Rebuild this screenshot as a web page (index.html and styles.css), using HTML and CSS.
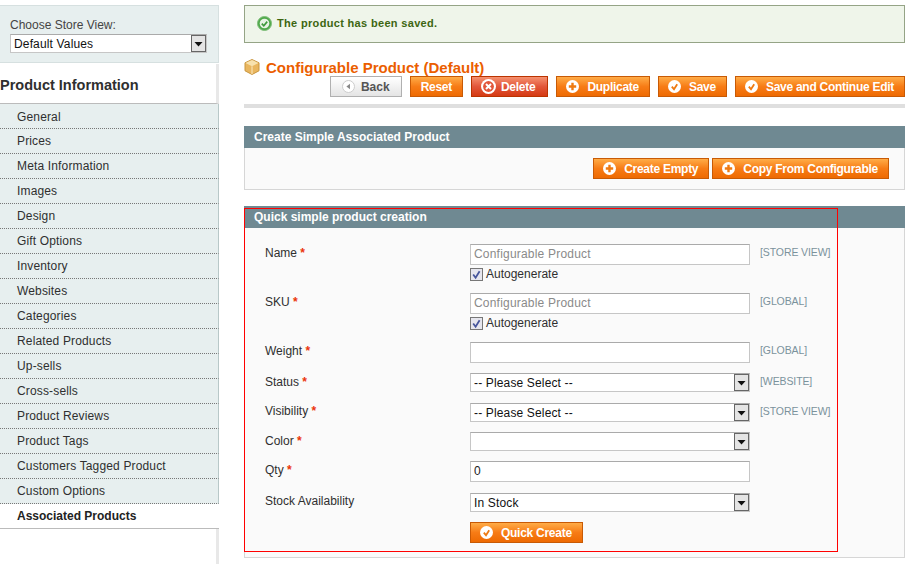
FILE: index.html
```html
<!DOCTYPE html>
<html lang="en">
<head>
    <meta charset="UTF-8">
    <meta name="viewport" content="width=device-width, initial-scale=1.0">
    <title>Configurable Product (Default)</title>
    <link rel="stylesheet" href="styles.css">
</head>
<body>
    <svg class="defs" width="0" height="0">
        <symbol id="i-plus" viewBox="0 0 13 13">
            <circle cx="6.5" cy="6.5" r="6.5" fill="#fff"/>
            <path d="M6.5 2.8v7.4M2.8 6.5h7.4" stroke="#ee7a12" stroke-width="2.4"/>
        </symbol>
        <symbol id="i-check" viewBox="0 0 13 13">
            <circle cx="6.5" cy="6.5" r="6.5" fill="#fff"/>
            <path d="M3.8 6.6l2.2 2.6 3.2-5" fill="none" stroke="#ee7a12" stroke-width="1.8"/>
        </symbol>
        <symbol id="i-arrow" viewBox="0 0 15 17">
            <rect x=".5" y=".5" width="14" height="16" fill="#e4e4e4" stroke="#666"/>
            <path d="M3.5 7h8l-4 4.5z" fill="#111"/>
        </symbol>
    </svg>

    <div class="page">
        <aside class="side">
            <div class="store">
                <label class="store-label">Choose Store View:</label>
                <div class="sel-wrap">
                    <select class="sel"><option>Default Values</option></select>
                    <svg class="sel-arrow"><use href="#i-arrow"/></svg>
                </div>
            </div>
            <h3 class="side-title">Product Information</h3>
            <ul class="tabs">
                <li>General</li>
                <li>Prices</li>
                <li>Meta Information</li>
                <li>Images</li>
                <li>Design</li>
                <li>Gift Options</li>
                <li>Inventory</li>
                <li>Websites</li>
                <li>Categories</li>
                <li>Related Products</li>
                <li>Up-sells</li>
                <li>Cross-sells</li>
                <li>Product Reviews</li>
                <li>Product Tags</li>
                <li>Customers Tagged Product</li>
                <li>Custom Options</li>
                <li class="active">Associated Products</li>
            </ul>
            <div class="side-rest"></div>
        </aside>

        <main class="main">
            <div class="msg">
                <svg class="msg-icon" viewBox="0 0 15 15" width="15" height="15">
                    <circle cx="7.5" cy="7.5" r="7" fill="#4fa84a" stroke="#7fbf7a"/>
                    <circle cx="7.5" cy="7.5" r="4.8" fill="#e8f3e4"/>
                    <path d="M4.8 7.6l2 2.2 3.4-4.2" fill="none" stroke="#3f9a3c" stroke-width="1.7"/>
                </svg>
                The product has been saved.
            </div>

            <div class="head">
                <h2 class="title">
                    <svg class="title-icon" viewBox="0 0 16 16" width="16" height="16">
                        <path d="M8 .5l7 3.3v8L8 15.5 1 11.8v-8z" fill="#e9b65f" stroke="#c9963f"/>
                        <path d="M1.5 4L8 7.3 14.5 4 8 1z" fill="#f8e2ae"/>
                        <path d="M8 7.3v7.8" stroke="#fbe9c2"/>
                    </svg>
                    Configurable Product (Default)
                </h2>
                <div class="actions">
                    <button class="btn btn-back">
                        <svg class="ico" viewBox="0 0 13 13">
                            <circle cx="6.5" cy="6.5" r="6" fill="#fff" stroke="#ccc"/>
                            <path d="M8 3.8v5.4L4.4 6.5z" fill="#888"/>
                        </svg>
                        Back
                    </button>
                    <button class="btn btn-plain">Reset</button>
                    <button class="btn btn-del">
                        <svg class="ico" viewBox="0 0 15 15">
                            <circle cx="7.5" cy="7.5" r="7.5" fill="#fff"/>
                            <circle cx="7.5" cy="7.5" r="5.4" fill="#e2563a"/>
                            <path d="M5 5l5 5M10 5l-5 5" stroke="#fff" stroke-width="2"/>
                        </svg>
                        Delete
                    </button>
                    <button class="btn"><svg class="ico"><use href="#i-plus"/></svg>Duplicate</button>
                    <button class="btn"><svg class="ico"><use href="#i-check"/></svg>Save</button>
                    <button class="btn"><svg class="ico"><use href="#i-check"/></svg>Save and Continue Edit</button>
                </div>
            </div>

            <section class="sect sect-first">
                <h4 class="sect-head">Create Simple Associated Product</h4>
                <div class="sect-body sect-btns">
                    <button class="btn"><svg class="ico"><use href="#i-plus"/></svg>Create Empty</button>
                    <button class="btn"><svg class="ico"><use href="#i-plus"/></svg>Copy From Configurable</button>
                </div>
            </section>

            <section class="sect sect-quick">
                <h4 class="sect-head">Quick simple product creation</h4>
                <div class="sect-body form">
                    <div class="row row-auto">
                        <label class="lbl">Name <em>*</em></label>
                        <div class="field">
                            <input class="txt txt-off" value="Configurable Product">
                            <div class="auto">
                                <svg class="check" viewBox="0 0 13 13" width="13" height="13">
                                    <rect x=".5" y=".5" width="12" height="12" fill="#e6e6ee" stroke="#777"/>
                                    <path d="M3.2 6.5l2.4 3.2 4-6.4" fill="none" stroke="#46559c" stroke-width="1.8"/>
                                </svg>
                                Autogenerate
                            </div>
                        </div>
                        <span class="scope">[STORE VIEW]</span>
                    </div>
                    <div class="row row-auto">
                        <label class="lbl">SKU <em>*</em></label>
                        <div class="field">
                            <input class="txt txt-off" value="Configurable Product">
                            <div class="auto">
                                <svg class="check" viewBox="0 0 13 13" width="13" height="13">
                                    <rect x=".5" y=".5" width="12" height="12" fill="#e6e6ee" stroke="#777"/>
                                    <path d="M3.2 6.5l2.4 3.2 4-6.4" fill="none" stroke="#46559c" stroke-width="1.8"/>
                                </svg>
                                Autogenerate
                            </div>
                        </div>
                        <span class="scope">[GLOBAL]</span>
                    </div>
                    <div class="row">
                        <label class="lbl">Weight <em>*</em></label>
                        <div class="field"><input class="txt"></div>
                        <span class="scope">[GLOBAL]</span>
                    </div>
                    <div class="row row-wide">
                        <label class="lbl">Status <em>*</em></label>
                        <div class="field sel-wrap">
                            <select class="sel"><option>-- Please Select --</option></select>
                            <svg class="sel-arrow"><use href="#i-arrow"/></svg>
                        </div>
                        <span class="scope">[WEBSITE]</span>
                    </div>
                    <div class="row">
                        <label class="lbl lbl-up">Visibility <em>*</em></label>
                        <div class="field sel-wrap">
                            <select class="sel"><option>-- Please Select --</option></select>
                            <svg class="sel-arrow"><use href="#i-arrow"/></svg>
                        </div>
                        <span class="scope">[STORE VIEW]</span>
                    </div>
                    <div class="row">
                        <label class="lbl">Color <em>*</em></label>
                        <div class="field sel-wrap">
                            <select class="sel"><option></option></select>
                            <svg class="sel-arrow"><use href="#i-arrow"/></svg>
                        </div>
                    </div>
                    <div class="row row-wide">
                        <label class="lbl">Qty <em>*</em></label>
                        <div class="field"><input class="txt" value="0"></div>
                    </div>
                    <div class="row">
                        <label class="lbl lbl-up">Stock Availability</label>
                        <div class="field sel-wrap">
                            <select class="sel"><option>In Stock</option></select>
                            <svg class="sel-arrow"><use href="#i-arrow"/></svg>
                        </div>
                    </div>
                    <div class="row">
                        <span class="lbl"></span>
                        <div class="field">
                            <button class="btn"><svg class="ico"><use href="#i-check"/></svg>Quick Create</button>
                        </div>
                    </div>
                </div>
                <div class="red-frame"></div>
            </section>
        </main>
    </div>
</body>
</html>
```

FILE: styles.css
```css
html, body {
    margin: 0;
    height: 100%;
    overflow: hidden;
    background-color: #fff;
    font-family: "Liberation Sans", Arial, sans-serif;
    font-size: 12px;
    color: #2f2f2f;
}

.defs {
    position: absolute;
}

.page {
    display: flex;
    align-items: flex-start;
    padding-top: 5px;
}

/* left column */
.side {
    width: 219px;
    flex: none;
}

.store {
    height: 58px;
    box-sizing: border-box;
    padding: 12px 11px 0 10px;
    background-color: #e7efef;
    border-top: 1px solid #d6e0e0;
    border-right: 1px solid #d6e0e0;
    border-bottom: 1px solid #d6e0e0;
}

.store-label {
    display: block;
    height: 16px;
    line-height: 15px;
    color: #444;
}

.side-title {
    margin: 1px 0 0;
    height: 40px;
    line-height: 42px;
    box-sizing: border-box;
    font-size: 14.5px;
    font-weight: bold;
    color: #2f2f2f;
    background-color: #fff;
    border-right: 3px solid #e8e8e8;
    border-bottom: 1px solid #bbb;
}

.tabs {
    list-style: none;
    margin: 0;
    padding: 0;
}

.tabs li {
    height: 25px;
    box-sizing: border-box;
    padding: 5px 0 0 17px;
    line-height: 15px;
    letter-spacing: .15px;
    background-color: #e7efef;
    border-right: 1px solid #b8c8c8;
    border-bottom: 1px dotted #777;
}

.tabs li:first-child {
    padding-top: 6px;
}

.tabs li.active {
    font-weight: bold;
    letter-spacing: 0;
    color: #222;
    background-color: #fff;
    border-right: none;
    border-bottom: 1px solid #bbb;
}

.side-rest {
    height: 40px;
    border-right: 3px solid #e8e8e8;
}

/* right column */
.main {
    width: 661px;
    margin-left: 25px;
    flex: none;
}

.msg {
    display: flex;
    align-items: center;
    gap: 5px;
    height: 38px;
    box-sizing: border-box;
    padding: 0 0 2px 12px;
    font-size: 11px;
    letter-spacing: .33px;
    font-weight: bold;
    color: #3d6611;
    background-color: #eff5ea;
    border: 1px solid #95a486;
}

.head {
    margin-top: 16px;
    padding-bottom: 6px;
    border-bottom: 4px solid #dfdfdf;
}

.title {
    display: flex;
    align-items: center;
    gap: 6px;
    margin: 0;
    height: 18px;
    font-size: 15px;
    line-height: 18px;
    font-weight: bold;
    color: #eb5e00;
}

.title-icon {
    flex: none;
    margin-top: -2px;
}

.actions {
    display: flex;
    justify-content: flex-end;
    gap: 8px;
    margin-top: -1px;
    padding-bottom: 1px;
}

.btn {
    display: inline-flex;
    align-items: center;
    height: 21px;
    box-sizing: border-box;
    padding: 0 10px 0 9px;
    font-family: inherit;
    font-size: 12px;
    letter-spacing: -.27px;
    font-weight: bold;
    color: #fff;
    white-space: nowrap;
    background: linear-gradient(#ffac47, #f77c16 50%, #ee6a02);
    border: 1px solid #c85a05;
    cursor: pointer;
}

.ico {
    width: 13px;
    height: 13px;
    flex: none;
    margin-right: 8px;
}

.btn-plain {
    padding: 0 10px;
}

.btn-back {
    letter-spacing: 0;
    color: #555;
    background: linear-gradient(#fff, #e4e4e4);
    border-color: #b0b0b0;
    padding: 0 11px 0 11px;
}

.btn-back .ico {
    margin-right: 6px;
}

.btn-del {
    background: linear-gradient(#f5916f, #e2563a 50%, #d53a13);
    border-color: #bb3300;
    padding: 0 12px 0 9px;
}

.btn-del .ico {
    width: 15px;
    height: 15px;
    margin-right: 5px;
}

.sect-first {
    margin-top: 18px;
}

.sect-quick {
    position: relative;
    margin-top: 16px;
}

.sect-head {
    margin: 0;
    height: 22px;
    box-sizing: border-box;
    padding-left: 10px;
    line-height: 23px;
    font-size: 12px;
    font-weight: bold;
    color: #fff;
    background-color: #6f8992;
}

.sect-body {
    box-sizing: border-box;
    background-color: #fafafa;
    border: 1px solid #d6d6d6;
    border-top: none;
}

.sect-btns {
    display: flex;
    justify-content: flex-end;
    gap: 3px;
    height: 42px;
    padding: 10px 15px 0 0;
}

.form {
    height: 330px;
    padding: 16px 0 0 20px;
}

.row {
    display: grid;
    grid-template-columns: 195px 280px auto;
    column-gap: 10px;
    padding-bottom: 10px;
}

.row-auto,
.row-wide {
    padding-bottom: 11px;
}

.lbl {
    line-height: 15px;
    padding-top: 2px;
    color: #2f2f2f;
}

.lbl-up {
    padding-top: 1px;
}

.lbl em {
    font-style: normal;
    font-weight: bold;
    color: #eb340a;
}

.scope {
    line-height: 15px;
    font-size: 10.5px;
    letter-spacing: -.1px;
    color: #7b929c;
    padding-top: 1px;
}

.field {
    min-width: 0;
}

.txt {
    display: block;
    width: 100%;
    height: 21px;
    box-sizing: border-box;
    padding: 0 3px 1px;
    font-family: inherit;
    font-size: 12px;
    letter-spacing: .2px;
    color: #222;
    background-color: #fff;
    border: 1px solid #c6c6c6;
    border-top-color: #aaa;
    border-radius: 0;
    outline: none;
}

.txt-off {
    color: #8a8a8a;
}

.auto {
    display: flex;
    align-items: center;
    gap: 3px;
    height: 14px;
    margin-top: 2px;
    padding-bottom: 1px;
    line-height: 14px;
}

.check {
    flex: none;
}

.sel-wrap {
    position: relative;
}

.sel {
    display: block;
    width: 100%;
    height: 19px;
    box-sizing: border-box;
    padding: 0 3px;
    font-family: inherit;
    font-size: 12px;
    letter-spacing: .15px;
    color: #111;
    background-color: #fff;
    border: 1px solid #c6c6c6;
    border-top-color: #aaa;
    border-radius: 0;
    appearance: none;
    outline: none;
}

.sel-arrow {
    position: absolute;
    top: 1px;
    right: 1px;
    width: 15px;
    height: 17px;
}

.red-frame {
    position: absolute;
    left: 0;
    top: 2px;
    width: 594px;
    height: 344px;
    box-sizing: border-box;
    border: 1px solid #f00;
    pointer-events: none;
}
```
